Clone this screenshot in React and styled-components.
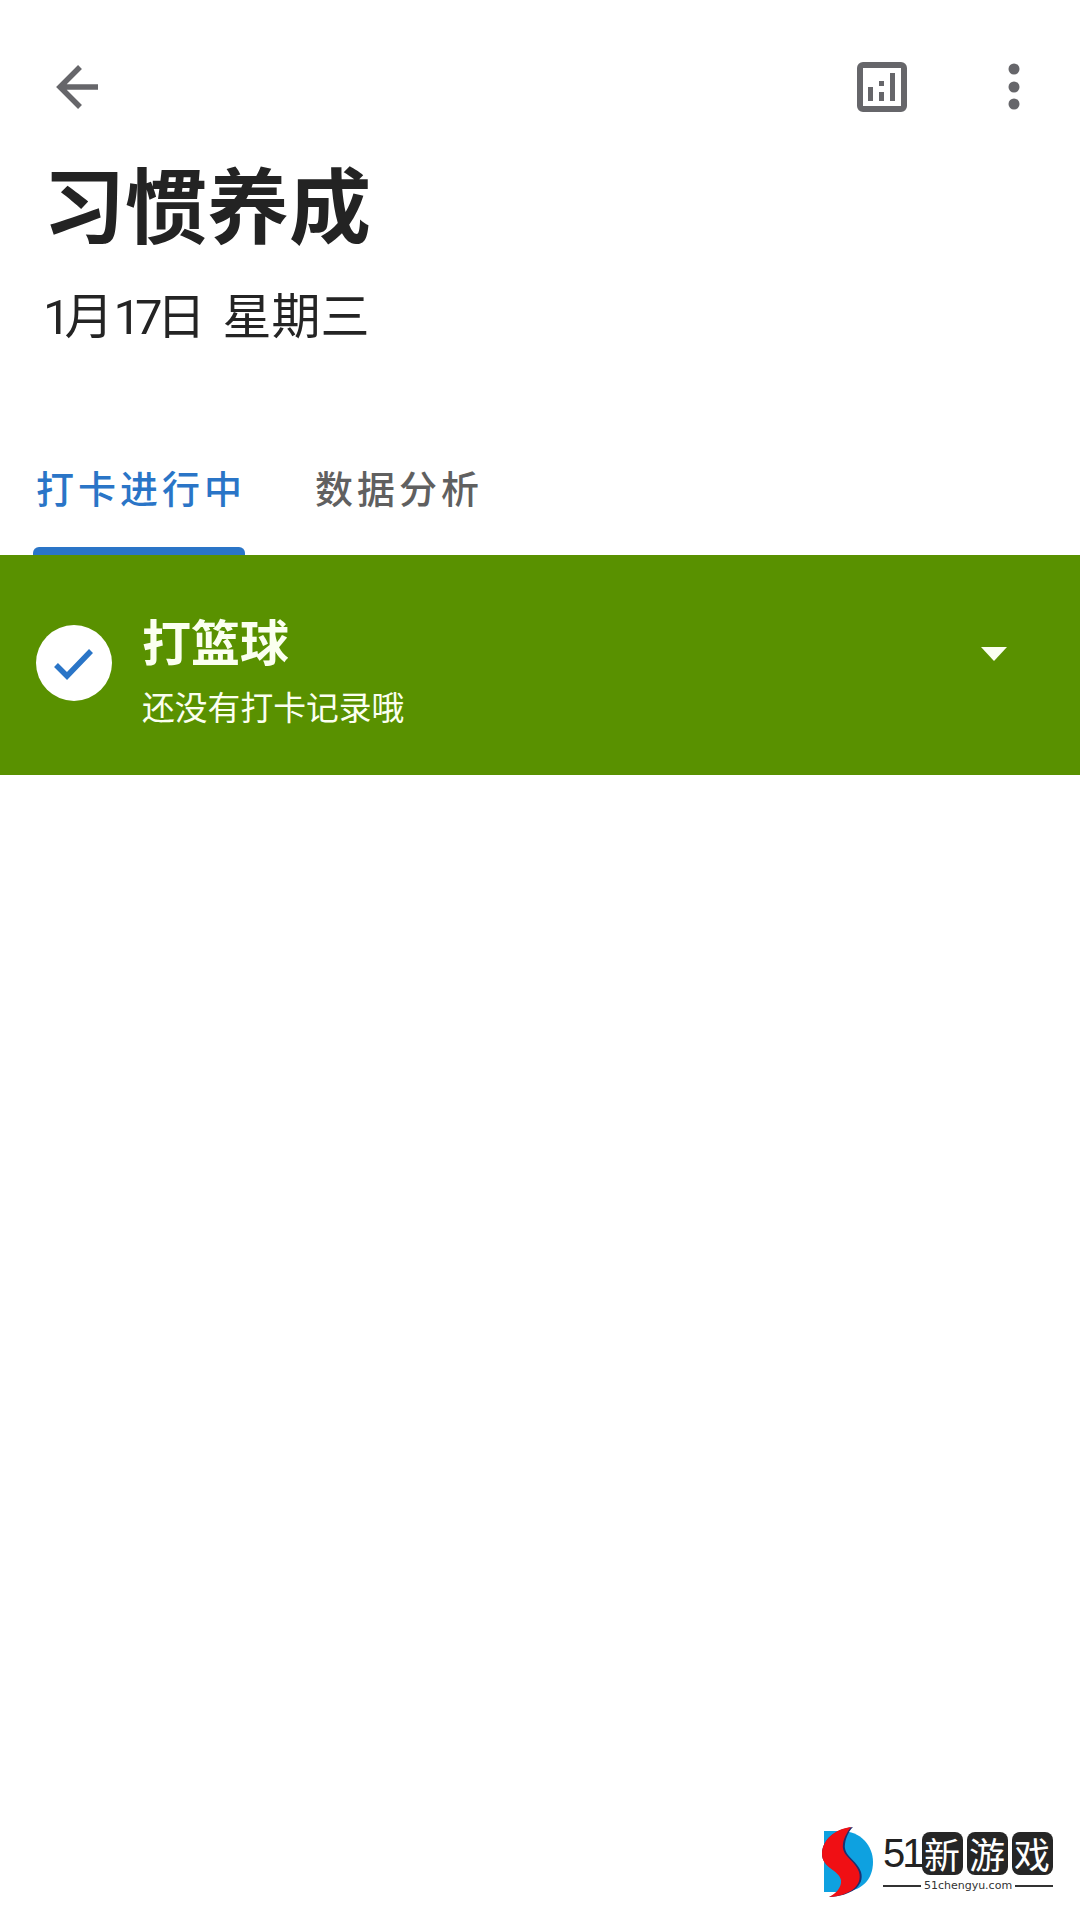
import React from 'react';
import styled, { createGlobalStyle } from 'styled-components';

const Global = createGlobalStyle`
  html, body { margin: 0; padding: 0; background: #fff; }
  body { font-family: "Noto Sans CJK SC", "Noto Sans", sans-serif; }
`;

const Page = styled.div`
  width: 1080px;
  height: 1920px;
  display: flex;
  flex-direction: column;
  overflow: hidden;
  background: #fff;
`;

const TopBar = styled.header`
  height: 50px;
  padding: 62px 60px 0 56px;
  display: flex;
  align-items: flex-start;
  justify-content: space-between;
`;

const Actions = styled.div`
  display: flex;
  align-items: flex-start;
  gap: 101px;
`;

const Title = styled.h1`
  margin: 45px 0 0 43px;
  font-size: 82px;
  line-height: 90px;
  font-weight: 700;
  color: #232323;
`;

const DateLine = styled.div`
  margin: 34px 0 0 43px;
  font-size: 49px;
  line-height: 64px;
  font-weight: 400;
  color: #242424;
  white-space: pre;
  word-spacing: 6px;
`;

const Num = styled.span`
  font-family: "Roboto", sans-serif;
  letter-spacing: -6px;
`;

const Tabs = styled.nav`
  margin-top: 110px;
  height: 95px;
  display: flex;
  padding-left: 33px;
  gap: 67px;
`;

const Tab = styled.div`
  position: relative;
  width: ${p => p.$w}px;
  padding-left: 3px;
  box-sizing: border-box;
  font-size: 38px;
  line-height: 54px;
  height: 95px;
  font-weight: 500;
  letter-spacing: 4px;
  white-space: nowrap;
  color: ${p => (p.$active ? '#2a75c7' : '#606060')};
  ${p => p.$active && `
    &::after {
      content: "";
      position: absolute;
      left: 0;
      right: 0;
      bottom: 0;
      height: 8px;
      background: #2a75c7;
      border-radius: 6px 6px 0 0;
    }
  `}
`;

const HabitCard = styled.section`
  height: 220px;
  background: #599100;
  display: flex;
  align-items: center;
  padding: 0 73px 0 36px;
  color: #fbfff0;
`;

const CheckCircle = styled.div`
  width: 76px;
  height: 76px;
  border-radius: 50%;
  background: #fff;
  flex: none;
  display: flex;
  align-items: center;
  justify-content: center;
  margin-top: -4px;
`;

const HabitText = styled.div`
  margin-left: 30px;
  flex: 1;
  display: flex;
  flex-direction: column;
`;

const HabitName = styled.div`
  font-size: 49px;
  line-height: 60px;
  font-weight: 700;
  margin-top: 8px;
`;

const HabitSub = styled.div`
  font-size: 32.8px;
  line-height: 44px;
  margin-top: 14px;
`;

const Caret = styled.div`
  width: 0;
  height: 0;
  border-left: 13px solid transparent;
  border-right: 13px solid transparent;
  border-top: 14px solid #fbfff0;
  margin-top: -23px;
`;

const Spacer = styled.div`
  flex: 1;
`;

const Watermark = styled.footer`
  display: flex;
  align-items: center;
  justify-content: flex-end;
  padding: 0 27px 22px 0;
  gap: 8px;
`;

const BrandCol = styled.div`
  display: flex;
  flex-direction: column;
  width: 170px;
`;

const BrandTop = styled.div`
  display: flex;
  align-items: center;
  height: 44px;
`;

const BrandNum = styled.span`
  font-family: "Liberation Sans", sans-serif;
  font-size: 40px;
  line-height: 44px;
  color: #222;
  letter-spacing: -3px;
`;

const BrandChar = styled.span`
  width: 41px;
  height: 43px;
  margin-right: ${p => (p.$last ? 0 : 4)}px;
  border-radius: 8px;
  background: #262626;
  color: #fff;
  font-size: 36px;
  line-height: 43px;
  text-align: center;
  font-family: "Noto Sans CJK SC", sans-serif;
  font-weight: 400;
`;

const BrandUrl = styled.div`
  display: flex;
  align-items: center;
  gap: 3px;
  margin-top: 4px;
  font-family: "DejaVu Sans", sans-serif;
  font-size: 11px;
  line-height: 14px;
  color: #333;
  white-space: nowrap;
  &::before, &::after {
    content: "";
    flex: 1;
    height: 2px;
    background: #333;
  }
`;

const ICON = '#66666a';

export default function App() {
  return (
    <Page>
      <Global />
      <TopBar>
        <svg width="44" height="46" viewBox="0 0 44 46" style={{ marginTop: 2 }}>
          <path d="M24 3 L4 23 L24 43 M4 23 H42" fill="none" stroke={ICON} strokeWidth="5.5" />
        </svg>
        <Actions>
          <svg width="50" height="50" viewBox="0 0 50 50">
            <rect x="3" y="3" width="44" height="44" rx="3" fill="none" stroke={ICON} strokeWidth="6" />
            <path d="M11 25h5v14h-5zM22 19h5v5h-5zM22 30h5v9h-5zM33 11h5v28h-5z" fill={ICON} />
          </svg>
          <svg width="12" height="48" viewBox="0 0 12 48" style={{ marginTop: 1 }}>
            <circle cx="6" cy="6" r="5.5" fill={ICON} />
            <circle cx="6" cy="24" r="5.5" fill={ICON} />
            <circle cx="6" cy="41" r="5.5" fill={ICON} />
          </svg>
        </Actions>
      </TopBar>
      <Title>习惯养成</Title>
      <DateLine><Num>1</Num>月<Num>17</Num>日 星期三</DateLine>
      <Tabs>
        <Tab $active $w={212}>打卡进行中</Tab>
        <Tab $w={170}>数据分析</Tab>
      </Tabs>
      <HabitCard>
        <CheckCircle>
          <svg width="42" height="34" viewBox="0 0 42 34" style={{ marginTop: 1 }}>
            <path d="M3 18 L14 29 L38 4" fill="none" stroke="#2a75c7" strokeWidth="5.5" />
          </svg>
        </CheckCircle>
        <HabitText>
          <HabitName>打篮球</HabitName>
          <HabitSub>还没有打卡记录哦</HabitSub>
        </HabitText>
        <Caret />
      </HabitCard>
      <Spacer />
      <Watermark>
        <svg width="54" height="72" viewBox="0 0 54 72">
          <path d="M3 5 H20 C40 5 52 20 52 36 C52 54 40 66 20 66 H3 Z" fill="#0ea1e0" />
          <path d="M32 1 C14 3 1 14 1 28 C1 42 20 44 22 54 C23 62 16 68 8 71 C30 70 44 60 40 46 C36 34 22 30 24 18 C25 10 29 4 32 1 Z" fill="#1d2f6f" />
          <path d="M30 1 C14 3 1 14 1 28 C1 42 18 44 20 54 C21 62 14 68 8 71 C28 70 42 60 38 46 C34 34 20 30 22 18 C23 10 28 4 30 1 Z" fill="#f00f14" />
        </svg>
        <BrandCol>
          <BrandTop>
            <BrandNum>51</BrandNum>
            <BrandChar>新</BrandChar>
            <BrandChar>游</BrandChar>
            <BrandChar $last>戏</BrandChar>
          </BrandTop>
          <BrandUrl>51chengyu.com</BrandUrl>
        </BrandCol>
      </Watermark>
    </Page>
  );
}
